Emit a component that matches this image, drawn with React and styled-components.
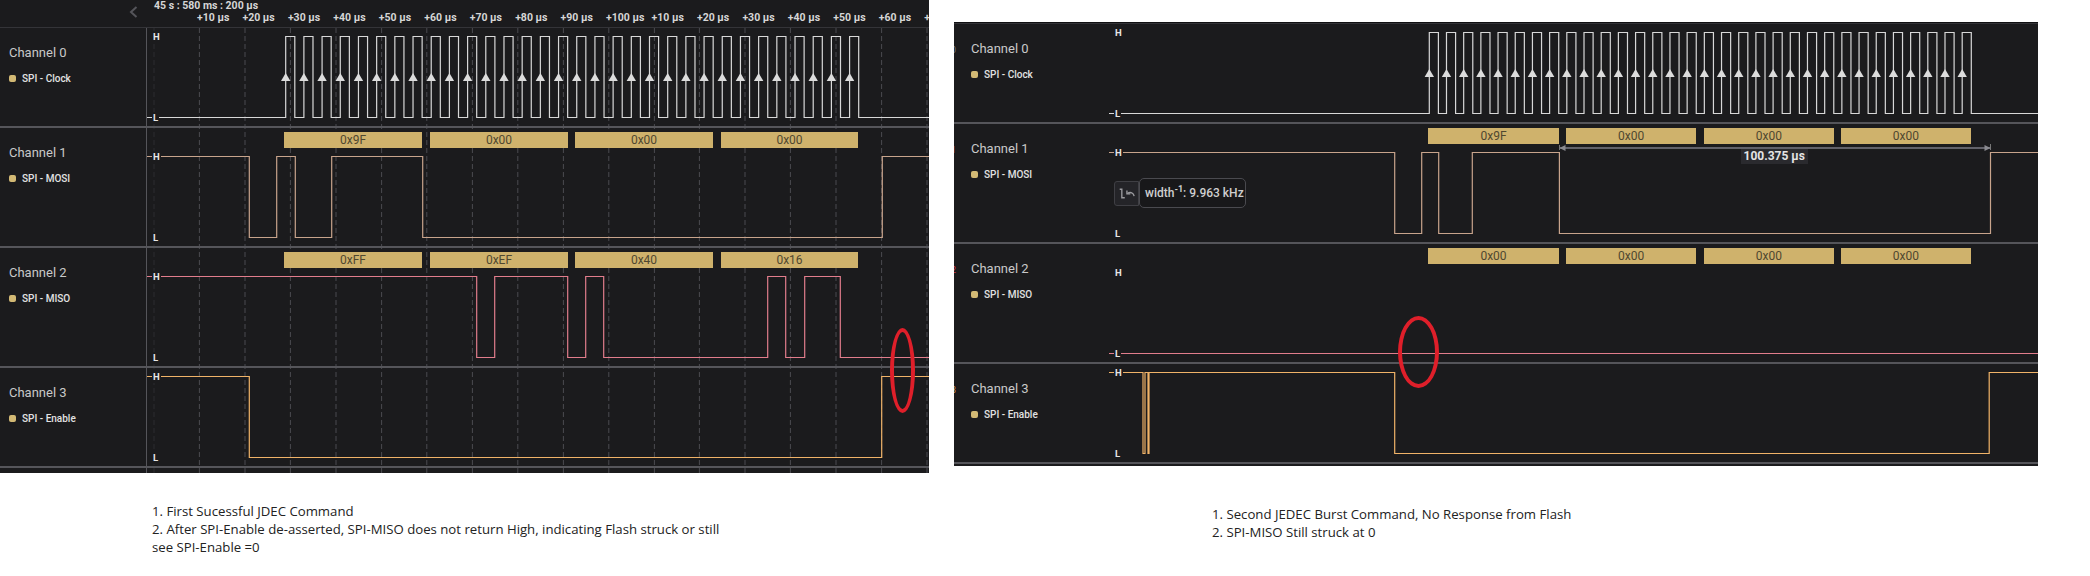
import React from 'react';
import styled, { createGlobalStyle } from 'styled-components';

const GlobalStyle = createGlobalStyle`
    html, body {
        margin: 0;
        padding: 0;
        background: #fff;
    }
    body {
        width: 2090px;
        height: 576px;
        overflow: hidden;
        font-family: Roboto, "Liberation Sans", sans-serif;
    }
`;

// every x below is in full page pixels, the plot offset is taken off when drawing
const FIRST = {
    plotLeft: 147,
    plotRight: 929,
    clockRises: Array.from({ length: 32 }, (_, i) => 285.7 + 18.19 * i),
    clockHigh: 9.1,
    mosi: [249.3, 276.7, 295.3, 331.7, 422.7, 882.3],
    miso: [476.7, 494.7, 567.7, 585.7, 603.7, 767.7, 785.7, 804.7, 840.3],
    enable: [249.3, 881.7],
    bars: [[284, 422], [430, 568], [575, 713], [721, 858]],
    grid: [199.4, 245, 290.4, 336, 381.6, 426.8, 472.4, 517.8, 563.4, 608.8, 654.4, 699.4, 745, 790.4, 836, 881.6, 927],
};

const SECOND = {
    plotLeft: 1109,
    plotRight: 2038,
    clockRises: Array.from({ length: 32 }, (_, i) => 1429.3 + 17.19 * i),
    clockHigh: 9.1,
    mosi: [1394.7, 1421.7, 1438.7, 1472.3, 1559.4, 1990.5],
    enable: [1143, 1145, 1148, 1149, 1394.7, 1989.2],
    bars: [[1428, 1559], [1566, 1696.2], [1704, 1833.8], [1840.8, 1971]],
    grid: [1502.6, 1932.4],
};

const TICKS = ['+10', '+20', '+30', '+40', '+50', '+60', '+70', '+80', '+90', '+100', '+10', '+20', '+30', '+40', '+50', '+60', '+70'];

const LEVELS = {
    short: { high: 8.5, low: 89.5 },
    tall: { high: 28.5, low: 109.5 },
};

const stepPath = (edges, startHigh, { plotLeft, plotRight }, { high, low }) => {
    let isHigh = startHigh;
    let d = `M0 ${isHigh ? high : low}`;
    edges.forEach((edge) => {
        const x = edge - plotLeft;
        isHigh = !isHigh;
        d += ` H${x} V${isHigh ? high : low}`;
    });
    return `${d} H${plotRight - plotLeft}`;
};

const clockEdges = (panel) => panel.clockRises.flatMap((rise) => [rise, rise + panel.clockHigh]);

const ChannelRow = ({ panel, index, label, level, color, edges, startHigh, bars, stubColor, children }) => {
    const levels = LEVELS[level];
    return (
        <Row $level={level}>
            <NameCell $wide={panel === SECOND}>
                {stubColor && <IndexStub $color={stubColor}>{index}</IndexStub>}
                <ChannelName>Channel {index}</ChannelName>
                <SignalLabel><Dot />{label}</SignalLabel>
            </NameCell>
            <Plot>
                <Trace>
                    {edges && <path d={stepPath(edges, startHigh, panel, levels)} fill="none" stroke={color} strokeWidth="1.2" />}
                    {index === 0 && panel.clockRises.map((rise) => {
                        const x = rise - panel.plotLeft;
                        return <polygon key={rise} points={`${x - 4.7},53 ${x + 4.7},53 ${x},45`} fill="#dcdcdc" />;
                    })}
                </Trace>
                <LevelMark $y={levels.high}>H</LevelMark>
                <LevelMark $y={levels.low}>L</LevelMark>
                {bars && panel.bars.map(([from, to], i) => (
                    <DataBar key={from} style={{ left: from - panel.plotLeft, width: to - from }}>{bars[i]}</DataBar>
                ))}
                {children}
            </Plot>
        </Row>
    );
};

const PulseIcon = () => (
    <svg width="17" height="17" viewBox="0 0 20 20" fill="none" stroke="#9a9a9e" strokeWidth="1.6">
        <path d="M2 5h2.5v10H8" />
        <path d="M19 13c-.6-3.6-4.2-5.4-8-3" />
        <path d="M10.500 6.500v4h4" />
    </svg>
);

const GridLines = ({ panel, top, faint }) => (
    <GridLayer style={{ left: panel.plotLeft - 1 }}>
        <line x1="0.5" x2="0.5" y1={top} y2="100%" stroke="#55555a" />
        {faint && <line x1={faint} x2={faint} y1={top} y2="100%" stroke="#2c2c30" strokeDasharray="5 3" />}
        {panel.grid.map((x) => (
            <line key={x} x1={x - panel.plotLeft + 1} x2={x - panel.plotLeft + 1} y1={top} y2="100%" stroke="#4b4b50" strokeDasharray="5 3" />
        ))}
    </GridLayer>
);

const App = () => (
    <Page>
        <GlobalStyle />
        <FirstFigure>
            <Panel>
                <GridLines panel={FIRST} top={28} faint={8} />
                <AxisBar>
                    <AxisCorner>
                        <svg width="9" height="12" viewBox="0 0 9 12" fill="none" stroke="#55555a" strokeWidth="2">
                            <path d="M7.500 1L2 6l5.500 5" />
                        </svg>
                    </AxisCorner>
                    <Axis>
                        <Timestamp>45 s : 580 ms : 200 µs</Timestamp>
                        {TICKS.map((tick, i) => (
                            <Tick key={i} style={{ left: 50 + 45.45 * i }}>{tick} µs</Tick>
                        ))}
                    </Axis>
                </AxisBar>
                <ChannelRow panel={FIRST} index={0} label="SPI - Clock" level="short" color="#d8d8d8" edges={clockEdges(FIRST)} />
                <ChannelRow panel={FIRST} index={1} label="SPI - MOSI" level="tall" color="#c8a48c" edges={FIRST.mosi} startHigh bars={['0x9F', '0x00', '0x00', '0x00']} />
                <ChannelRow panel={FIRST} index={2} label="SPI - MISO" level="tall" color="#e27d8c" edges={FIRST.miso} startHigh bars={['0xFF', '0xEF', '0x40', '0x16']} />
                <ChannelRow panel={FIRST} index={3} label="SPI - Enable" level="short" color="#f0b368" edges={FIRST.enable} startHigh />
                <Tail $height={5} />
                <Callout style={{ left: 890, top: 328, width: 25, height: 85 }} />
            </Panel>
            <Notes $indent={152} $gap={29}>
                <li>1. First Sucessful JDEC Command</li>
                <li>2. After SPI-Enable de-asserted, SPI-MISO does not return High, indicating Flash struck or still</li>
                <li>see SPI-Enable =0</li>
            </Notes>
        </FirstFigure>
        <SecondFigure>
            <Panel>
                <GridLines panel={SECOND} top={0} />
                <TopEdge />
                <ChannelRow panel={SECOND} index={0} label="SPI - Clock" level="short" color="#d8d8d8" edges={clockEdges(SECOND)} stubColor="#77777a" />
                <ChannelRow panel={SECOND} index={1} label="SPI - MOSI" level="tall" color="#c8a48c" edges={SECOND.mosi} startHigh bars={['0x9F', '0x00', '0x00', '0x00']} stubColor="#9a5a30">
                    <Trace>
                        <path d="M450.400 24H881.500" stroke="#62626a" strokeWidth="2" />
                        <path d="M450.500 21v5M881.500 20v6" stroke="#777" strokeWidth="1" />
                        <polygon points="450.500,24 456.500,21 456.500,27" fill="#8a8a90" />
                        <polygon points="881.500,24 875.500,21 875.500,27" fill="#8a8a90" />
                    </Trace>
                    <Measure>100.375 µs</Measure>
                    <PulseTip>
                        <TipButton><PulseIcon /></TipButton>
                        <TipBubble>width<sup>-1</sup>: 9.963 kHz</TipBubble>
                    </PulseTip>
                </ChannelRow>
                <ChannelRow panel={SECOND} index={2} label="SPI - MISO" level="tall" color="#e27d8c" edges={[]} bars={['0x00', '0x00', '0x00', '0x00']} stubColor="#d43a48" />
                <ChannelRow panel={SECOND} index={3} label="SPI - Enable" level="short" color="#f0b368" edges={SECOND.enable} startHigh stubColor="#d89a50" />
                <Tail $height={2} />
                <Callout style={{ left: 444, top: 294, width: 41, height: 72 }} />
            </Panel>
            <Notes $indent={258} $gap={39}>
                <li>1. Second JEDEC Burst Command, No Response from Flash</li>
                <li>2. SPI-MISO Still struck at 0</li>
            </Notes>
        </SecondFigure>
    </Page>
);

const Page = styled.div`
    display: flex;
    align-items: flex-start;
    width: 2090px;
    height: 576px;
    background: #fff;
`;
const FirstFigure = styled.div`
    width: 929px;
`;
const SecondFigure = styled.div`
    width: 1084px;
    margin-left: 25px;
    padding-top: 22px;
`;
const Panel = styled.div`
    position: relative;
    background: #1b1b1d;
    overflow: hidden;
`;
const GridLayer = styled.svg`
    position: absolute;
    top: 0;
    width: 100%;
    height: 100%;
`;
const AxisBar = styled.div`
    position: relative;
    display: flex;
    height: 28px;
    box-sizing: border-box;
    border-bottom: 1px solid #343438;
`;
const AxisCorner = styled.div`
    width: 147px;
    flex: none;
    box-sizing: border-box;
    padding: 6px 0 0 129px;
    svg {
        display: block;
    }
`;
const Axis = styled.div`
    position: relative;
    flex: 1;
    overflow: hidden;
    color: #d6d6d6;
    font-size: 10.500px;
    font-weight: 700;
    line-height: 12px;
`;
const Timestamp = styled.div`
    padding: 0 0 0 7px;
    white-space: nowrap;
`;
const Tick = styled.span`
    position: absolute;
    top: 12px;
    white-space: nowrap;
`;
const TopEdge = styled.div`
    position: relative;
    height: 2px;
    box-sizing: border-box;
    background: #101012;
    border-bottom: 1px solid #333337;
`;
const Row = styled.div`
    position: relative;
    display: flex;
    height: ${(p) => (p.$level === 'tall' ? 120 : 100)}px;
    box-sizing: border-box;
    border-bottom: 2px solid #55555a;
`;
const NameCell = styled.div`
    position: relative;
    width: ${(p) => (p.$wide ? 155 : 147)}px;
    flex: none;
    box-sizing: border-box;
    padding: 16px 0 0 ${(p) => (p.$wide ? 17 : 9)}px;
`;
const IndexStub = styled.span`
    position: absolute;
    left: -3px;
    top: 19px;
    color: ${(p) => p.$color};
    font-size: 9px;
    line-height: 14px;
`;
const ChannelName = styled.div`
    color: #c9c9c9;
    font-size: 13px;
    line-height: 17px;
`;
const SignalLabel = styled.div`
    display: flex;
    align-items: center;
    gap: 6px;
    margin-top: 11px;
    color: #e2e2e2;
    font-size: 10px;
    font-weight: 500;
    line-height: 13px;
`;
const Dot = styled.i`
    width: 7px;
    height: 7px;
    border-radius: 2px;
    background: #d2b974;
`;
const Plot = styled.div`
    position: relative;
    flex: 1;
`;
const Trace = styled.svg`
    position: absolute;
    inset: 0;
    width: 100%;
    height: 100%;
    overflow: visible;
`;
const LevelMark = styled.span`
    position: absolute;
    left: 5px;
    top: ${(p) => p.$y - 6}px;
    padding: 0 1px;
    background: #1b1b1d;
    color: #e6e6e6;
    font-size: 9.500px;
    font-weight: 700;
    line-height: 12px;
`;
const DataBar = styled.div`
    position: absolute;
    top: 4px;
    height: 16px;
    background: #cfb26c;
    color: #4f4830;
    font-size: 12px;
    line-height: 16px;
    text-align: center;
`;
const Measure = styled.div`
    position: absolute;
    left: 631.500px;
    top: 25px;
    width: 67.500px;
    height: 15px;
    background: #2a2a2e;
    color: #e4e4e4;
    font-size: 12px;
    font-weight: 700;
    line-height: 15px;
    text-align: center;
    white-space: nowrap;
`;
const PulseTip = styled.div`
    position: absolute;
    left: 5px;
    top: 54px;
    display: flex;
    align-items: center;
`;
const TipButton = styled.div`
    display: flex;
    align-items: center;
    justify-content: center;
    width: 25px;
    height: 25px;
    box-sizing: border-box;
    border: 1px solid #3f3f44;
    border-radius: 3px 0 0 3px;
    background: #242428;
`;
const TipBubble = styled.div`
    width: 107px;
    height: 30px;
    box-sizing: border-box;
    padding-left: 5px;
    border: 1px solid #4a4a4f;
    border-radius: 5px;
    background: #18181a;
    color: #cfcfcf;
    font-size: 12px;
    font-weight: 500;
    line-height: 28px;
    white-space: nowrap;
    sup {
        font-size: 9px;
        font-weight: 700;
        line-height: 0;
    }
`;
const Tail = styled.div`
    height: ${(p) => p.$height}px;
`;
const Callout = styled.div`
    position: absolute;
    box-sizing: border-box;
    border: 4px solid #df1f2a;
    border-radius: 50%;
`;
const Notes = styled.ul`
    margin: ${(p) => p.$gap}px 0 0;
    padding: 0 0 0 ${(p) => p.$indent}px;
    list-style: none;
    color: #222;
    font-family: "Open Sans", sans-serif;
    font-size: 13.200px;
    line-height: 18px;
    white-space: nowrap;
`;

export default App;
